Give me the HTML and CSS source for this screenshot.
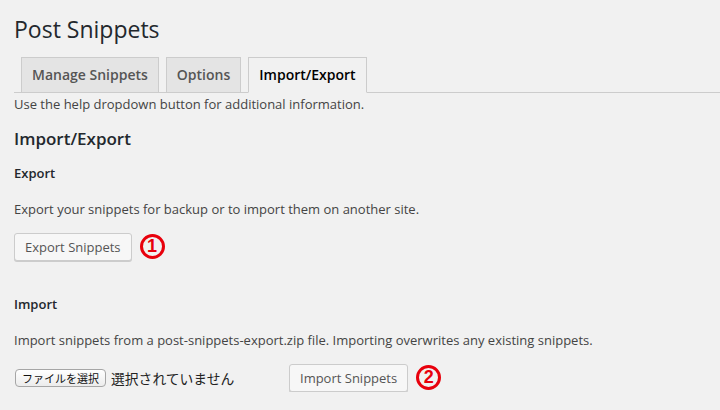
FILE: index.html
```html
<!DOCTYPE html>
<html lang="en">
<head>
<meta charset="utf-8">
<title>Post Snippets</title>
<link rel="stylesheet" href="styles.css">
</head>
<body>
<div class="wrap">
  <h1 class="title">Post Snippets</h1>
  <nav class="tabs">
    <span class="tab">Manage Snippets</span>
    <span class="tab">Options</span>
    <span class="tab active">Import/Export</span>
  </nav>
  <p class="help">Use the help dropdown button for additional information.</p>
  <h2 class="section-title">Import/Export</h2>

  <h3 class="label">Export</h3>
  <p class="para">Export your snippets for backup or to import them on another site.</p>
  <div class="row">
    <button class="button">Export Snippets</button>
    <span class="mark">1</span>
  </div>

  <h3 class="label label-import">Import</h3>
  <p class="para">Import snippets from a post-snippets-export.zip file. Importing overwrites any existing snippets.</p>
  <div class="row row-import">
    <div class="file">
      <span class="file-btn">ファイルを選択</span>
      <span class="file-name">選択されていません</span>
    </div>
    <button class="button">Import Snippets</button>
    <span class="mark mark-2">2</span>
  </div>
</div>
</body>
</html>
```
FILE: styles.css
```css
html, body {
  margin: 0;
  padding: 0;
  background: #f1f1f1;
}
body {
  font-family: "Open Sans", "Noto Sans", sans-serif;
  font-size: 13px;
  color: #444;
}
.wrap {
  padding: 14px 0 0 14px;
}
.title {
  margin: 0;
  font-size: 23px;
  line-height: 30px;
  font-weight: 400;
  color: #23282d;
}
.tabs {
  margin-top: 13px;
  display: flex;
  border-bottom: 1px solid #ccc;
  padding-left: 0;
}
.tab {
  display: block;
  margin-left: 7px;
  margin-bottom: -1px;
  padding: 5px 10px;
  border: 1px solid #ccc;
  background: #e4e4e4;
  color: #555;
  font-size: 14px;
  line-height: 24px;
  font-weight: 600;
}
.tab.active {
  background: #f1f1f1;
  border-bottom-color: #f1f1f1;
  color: #000;
}
.help {
  margin: 2px 0 0;
  line-height: 19.5px;
}
.section-title {
  margin: 12px 0 0;
  font-size: 17px;
  line-height: 24px;
  font-weight: 600;
  color: #23282d;
}
.label {
  margin: 13px 0 0;
  font-size: 13px;
  line-height: 19.5px;
  font-weight: 600;
  color: #23282d;
}
.label-import {
  margin-top: 34px;
}
.para {
  margin: 16.5px 0 0;
  line-height: 19.5px;
}
.row {
  margin-top: 13.5px;
  display: flex;
  align-items: center;
}
.button {
  font-family: "Open Sans", "Noto Sans", sans-serif;
  font-size: 13px;
  line-height: 26px;
  height: 28px;
  padding: 0 10px;
  margin: 0;
  border: 1px solid #ccc;
  border-radius: 3px;
  background: #f7f7f7;
  color: #555;
  box-shadow: 0 1px 0 #ccc;
}
.mark {
  box-sizing: border-box;
  width: 25px;
  height: 25px;
  margin-left: 8px;
  border: 3px solid #e8000c;
  border-radius: 50%;
  color: #e8000c;
  font-family: "Liberation Sans", Arial, sans-serif;
  font-weight: 700;
  font-size: 18px;
  line-height: 19px;
  text-align: center;
}
.mark-2 {
  margin-left: 8px;
}
.file {
  width: 275px;
  display: flex;
  align-items: center;
}
.file-btn {
  box-sizing: border-box;
  height: 18px;
  margin-left: 1px;
  padding: 0 6px;
  border: 1px solid #a6a6a6;
  border-radius: 4px;
  background: linear-gradient(#ffffff, #ececec);
  color: #111;
  font-family: "Noto Sans CJK JP", sans-serif;
  font-size: 11px;
  line-height: 16px;
}
.file-name {
  margin-left: 5px;
  color: #222;
  font-family: "Noto Sans CJK JP", sans-serif;
  font-size: 13.8px;
  line-height: 20px;
}
```
